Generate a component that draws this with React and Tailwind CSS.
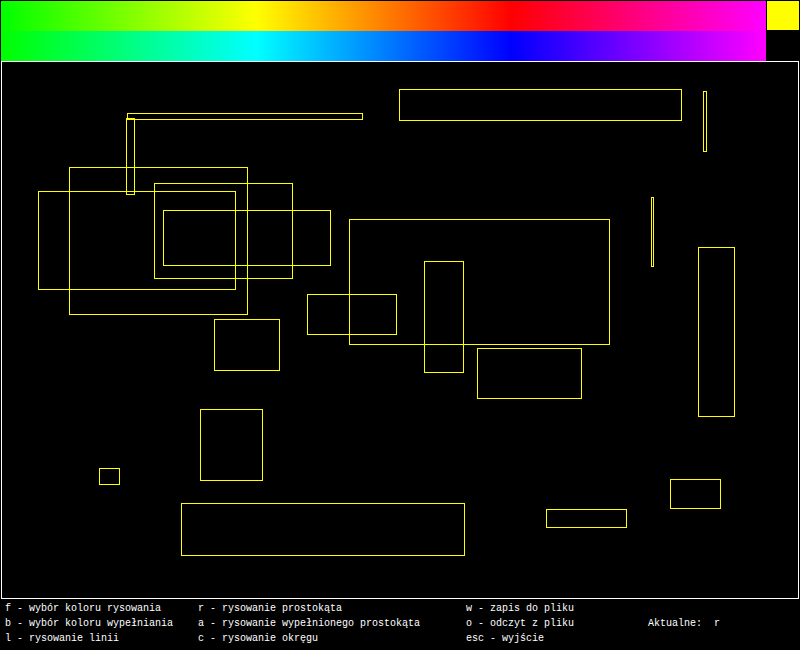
import React from "react";

// prostokąty narysowane na płótnie: [x1, y1, x2, y2] we współrzędnych strony
const rects = [
  [127, 113, 362, 119],
  [126, 118, 134, 194],
  [399, 89, 681, 120],
  [703, 91, 706, 151],
  [651, 197, 653, 266],
  [69, 167, 247, 314],
  [38, 191, 235, 289],
  [154, 183, 292, 278],
  [163, 210, 330, 265],
  [349, 219, 609, 344],
  [424, 261, 463, 372],
  [307, 294, 396, 334],
  [477, 348, 581, 398],
  [698, 247, 734, 416],
  [214, 319, 279, 370],
  [200, 409, 262, 480],
  [99, 468, 119, 484],
  [181, 503, 464, 555],
  [546, 509, 626, 527],
  [670, 479, 720, 508],
];

const help = [
  ["f - wybór koloru rysowania", "r - rysowanie prostokąta", "w - zapis do pliku", ""],
  ["b - wybór koloru wypełniania", "a - rysowanie wypełnionego prostokąta", "o - odczyt z pliku", "Aktualne:  r"],
  ["l - rysowanie linii", "c - rysowanie okręgu", "esc - wyjście", ""],
];

export default function App() {
  return (
    <div className="w-[800px] h-[650px] bg-black overflow-hidden flex flex-col">
      {/* paleta kolorów */}
      <div className="h-[61px] pt-[1px] flex items-start">
        <div className="w-[765px] ml-[1px] flex flex-col">
          <div className="h-[30px] bg-[linear-gradient(to_right,#00ff00,#ffff00,#ff0000,#ff00ff)]"></div>
          <div className="h-[30px] bg-[linear-gradient(to_right,#00ff00,#00ffff,#0000ff,#ff00ff)]"></div>
        </div>
        <div className="ml-[1px] w-[32px] h-[29px] bg-[#ffff00]"></div>
      </div>

      {/* płótno */}
      <div className="ml-[1px] w-[798px] h-[538px] border border-white">
        <svg width="796" height="536" viewBox="2 62 796 536" shapeRendering="crispEdges" className="block">
          {rects.map(([x1, y1, x2, y2], i) => (
            <rect key={i} x={x1 + 0.5} y={y1 + 0.5} width={x2 - x1} height={y2 - y1} fill="none" stroke="#ffff00" strokeWidth="1" />
          ))}
        </svg>
      </div>

      {/* pomoc */}
      <div className="mt-[2px] pl-[5px] font-['Liberation_Mono',monospace] text-[10px] leading-[15px] text-white">
        {help.map((row, i) => (
          <div key={i} className="grid grid-cols-[193px_268px_182px_1fr] whitespace-pre">
            {row.map((t, j) => (
              <span key={j}>{t}</span>
            ))}
          </div>
        ))}
      </div>
    </div>
  );
}
